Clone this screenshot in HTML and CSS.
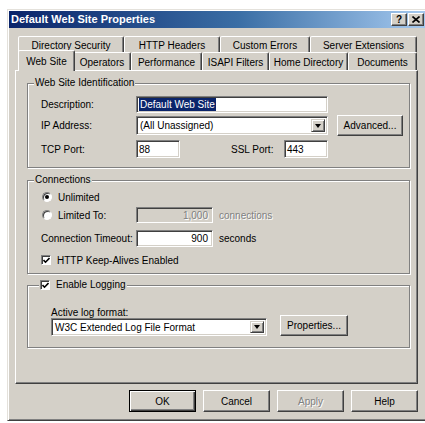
FILE: index.html
```html
<!DOCTYPE html>
<html>
<head>
<meta charset="utf-8">
<title>Default Web Site Properties</title>
<link rel="stylesheet" href="styles.css">
</head>
<body>
<div class="window">
  <div class="titlebar">
    <span class="title">Default Web Site Properties</span>
    <div class="tb-btns">
      <span class="tb-btn help">?</span>
      <span class="tb-btn close"><svg width="8" height="7" viewBox="0 0 8 7"><path d="M0.5 0.5 L7.5 6.5 M7.5 0.5 L0.5 6.5" stroke="#000" stroke-width="1.6" fill="none"/></svg></span>
    </div>
  </div>

  <div class="tabs">
    <div class="tabrow back">
      <div class="tab t1">Directory Security</div>
      <div class="tab t2">HTTP Headers</div>
      <div class="tab t3">Custom Errors</div>
      <div class="tab t4">Server Extensions</div>
    </div>
    <div class="tabrow front">
      <div class="tab sel f1">Web Site</div>
      <div class="tab f2">Operators</div>
      <div class="tab f3">Performance</div>
      <div class="tab f4">ISAPI Filters</div>
      <div class="tab f5">Home Directory</div>
      <div class="tab f6">Documents</div>
    </div>
  </div>

  <div class="panel">
    <div class="group g1">
      <div class="legend">Web Site Identification</div>
      <div class="row r-desc">
        <span class="label">Description:</span>
        <div class="field w-desc"><span class="hilite">Default Web Site</span></div>
      </div>
      <div class="row r-ip">
        <span class="label">IP Address:</span>
        <div class="combo w-ip"><span class="combo-text">(All Unassigned)</span><span class="dd"><i class="tri"></i></span></div>
        <div class="btn adv">Advanced...</div>
      </div>
      <div class="row r-port">
        <span class="label">TCP Port:</span>
        <div class="field w-port">88</div>
        <span class="label ssl">SSL Port:</span>
        <div class="field w-port">443</div>
      </div>
    </div>

    <div class="group g2">
      <div class="legend">Connections</div>
      <div class="row r-unl">
        <span class="radio on"></span><span class="opt">Unlimited</span>
      </div>
      <div class="row r-lim">
        <span class="optcell"><span class="radio"></span><span class="opt">Limited To:</span></span>
        <div class="field w-num disabled num">1,000</div>
        <span class="unit disabled-text">connections</span>
      </div>
      <div class="row r-to">
        <span class="label">Connection Timeout:</span>
        <div class="field w-num num">900</div>
        <span class="unit">seconds</span>
      </div>
      <div class="row r-keep">
        <span class="check on"><svg width="7" height="7" viewBox="0 0 7 7"><path d="M0.5 3 L2.5 5.2 L6.5 1" stroke="#000" stroke-width="1.6" fill="none"/></svg></span><span class="opt">HTTP Keep-Alives Enabled</span>
      </div>
    </div>

    <div class="group g3">
      <div class="legend check-legend">
        <span class="check on"><svg width="7" height="7" viewBox="0 0 7 7"><path d="M0.5 3 L2.5 5.2 L6.5 1" stroke="#000" stroke-width="1.6" fill="none"/></svg></span><span class="opt">Enable Logging</span>
      </div>
      <div class="row r-fmt-label">Active log format:</div>
      <div class="row r-fmt">
        <div class="combo w-fmt"><span class="combo-text">W3C Extended Log File Format</span><span class="dd"><i class="tri"></i></span></div>
        <div class="btn props">Properties...</div>
      </div>
    </div>
  </div>

  <div class="buttons">
    <div class="btn dlg default">OK</div>
    <div class="btn dlg">Cancel</div>
    <div class="btn dlg disabled-text">Apply</div>
    <div class="btn dlg">Help</div>
  </div>
</div>
</body>
</html>
```

FILE: styles.css
```css
* { box-sizing: border-box; }
html, body {
  margin: 0;
  padding: 0;
  width: 425px;
  height: 423px;
  background: #fff;
  overflow: hidden;
}
body {
  font-family: "Liberation Sans", Arial, sans-serif;
  font-size: 10px;
  color: #000;
}

.window {
  margin: 9px 0 0 7px;
  width: 421px;
  height: 412px;
  background: #d4d0c8;
  border: 1px solid;
  border-color: #e4e1db #404040 #404040 #e4e1db;
  box-shadow: inset 1px 1px #fff, inset -1px -1px #808080;
  padding: 1px;
}

/* title bar */
.titlebar {
  height: 17px;
  background: linear-gradient(to right, #0a246a, #3a6ea5 55%, #a6caf0);
  display: flex;
  align-items: center;
  justify-content: space-between;
  padding: 0 2px 0 2px;
}
.title {
  color: #fff;
  font-weight: bold;
  font-size: 11px;
  line-height: 13px;
}
.tb-btns { display: flex; gap: 1px; }
.tb-btn {
  width: 16px;
  height: 13px;
  background: #d4d0c8;
  border: 1px solid;
  border-color: #fff #404040 #404040 #fff;
  box-shadow: inset -1px -1px #808080;
  display: flex;
  align-items: center;
  justify-content: center;
  font-weight: bold;
  font-size: 10px;
  line-height: 10px;
}

/* tabs */
.tabs { margin: 8px 0 0 6px; width: 403px; }
.tabrow { display: flex; }
.tabrow.back { padding-left: 3px; height: 16px; }
.tabrow.front { padding-left: 5px; height: 18px; align-items: flex-end; }
.tab {
  height: 100%;
  border: 1px solid;
  border-bottom: none;
  border-color: #fff #404040 transparent #fff;
  box-shadow: inset -1px 0 #808080;
  border-radius: 2px 2px 0 0;
  display: flex;
  align-items: center;
  justify-content: center;
  white-space: nowrap;
  background: #d4d0c8;
  padding-top: 1px;
}
.t1 { width: 106px; }
.t2 { width: 96px; }
.t3 { width: 90px; }
.t4 { width: 107px; }
.f1 { width: 53px; }
.f2 { width: 58px; }
.f3 { width: 71px; }
.f4 { width: 67px; }
.f5 { width: 79px; }
.f6 { width: 69px; }
.tab.sel {
  width: 57px;
  height: 21px;
  margin: -2px -2px -1px -2px;
  position: relative;
  z-index: 1;
  padding-top: 0;
}

/* panel */
.panel {
  margin-left: 6px;
  width: 403px;
  height: 314px;
  border: 1px solid;
  border-color: #fff #404040 #404040 #fff;
  box-shadow: inset -1px -1px #808080;
  padding: 12px 7px 0 11px;
}

.group {
  border: 1px solid #808080;
  box-shadow: 1px 1px 0 #fff, inset 1px 1px 0 #fff;
  padding-left: 13px;
}
.g1 { height: 85px; }
.g2 { height: 94px; margin-top: 12px; }
.g3 { height: 63px; margin-top: 11px; padding-left: 23px; }

.legend {
  margin: -7px 0 0 -7px;
  padding: 0 1px;
  width: max-content;
  height: 12px;
  line-height: 12px;
  background: #d4d0c8;
}
.check-legend {
  margin-left: -12px;
  display: flex;
  align-items: center;
}

.row { display: flex; align-items: center; white-space: nowrap; }
.label { width: 95px; flex: none; }
.label.ssl { width: 53px; margin-left: 51px; }

.r-desc { height: 17px; margin-top: 7px; }
.r-ip { height: 21px; margin-top: 2px; }
.r-port { height: 18px; margin-top: 4px; }

.r-unl { height: 14px; margin-top: 4px; }
.r-lim { height: 16px; margin-top: 3px; }
.r-to { height: 17px; margin-top: 7px; }
.r-keep { height: 14px; margin-top: 6px; }

.r-fmt-label { height: 12px; margin-top: 15px; }
.r-fmt { height: 18px; align-items: flex-end; }

/* controls */
.field {
  height: 100%;
  background: #fff;
  border: 1px solid;
  border-color: #808080 #fff #fff #808080;
  box-shadow: inset 1px 1px #404040, inset -1px -1px #d4d0c8;
  padding: 0 2px;
  display: flex;
  align-items: center;
  overflow: hidden;
}
.field.num { justify-content: flex-end; padding-right: 4px; }
.field.disabled {
  background: #d4d0c8;
  color: #808080;
  text-shadow: 1px 1px #fff;
}
.w-desc { width: 192px; }
.w-port { width: 44px; }
.w-num { width: 77px; flex: none; }
.hilite { background: #0a246a; color: #fff; padding: 1px 1px; }

.combo {
  background: #fff;
  border: 1px solid;
  border-color: #808080 #fff #fff #808080;
  box-shadow: inset 1px 1px #404040, inset -1px -1px #d4d0c8;
  padding: 2px 2px 2px 3px;
  display: flex;
  align-items: center;
  flex: none;
}
.w-ip { width: 192px; height: 19px; }
.w-fmt { width: 216px; height: 18px; }
.combo-text { flex: 1; }
.dd {
  width: 14px;
  height: 100%;
  flex: none;
  background: #d4d0c8;
  border: 1px solid;
  border-color: #d4d0c8 #404040 #404040 #d4d0c8;
  box-shadow: inset 1px 1px #fff, inset -1px -1px #808080;
  display: flex;
  align-items: center;
  justify-content: center;
}
.tri {
  width: 0;
  height: 0;
  border-left: 3.5px solid transparent;
  border-right: 3.5px solid transparent;
  border-top: 4px solid #000;
}

.btn {
  background: #d4d0c8;
  border: 1px solid;
  border-color: #fff #404040 #404040 #fff;
  box-shadow: inset -1px -1px #808080;
  display: flex;
  align-items: center;
  justify-content: center;
  flex: none;
  white-space: nowrap;
}
.adv { width: 66px; height: 21px; margin-left: 9px; }
.props { width: 68px; height: 21px; margin-left: 13px; margin-top: -3px; }

.radio {
  width: 10px;
  height: 10px;
  border-radius: 50%;
  background: #fff;
  border: 1px solid;
  border-color: #808080 #fff #fff #808080;
  box-shadow: inset 1px 1px #404040;
  display: flex;
  align-items: center;
  justify-content: center;
  flex: none;
  margin-left: 1px;
}
.radio.on::after {
  content: "";
  width: 4px;
  height: 4px;
  border-radius: 50%;
  background: #000;
}
.opt { margin-left: 6px; }
.optcell { width: 95px; display: flex; align-items: center; flex: none; }

.check {
  width: 10px;
  height: 10px;
  background: #fff;
  border: 1px solid;
  border-color: #808080 #fff #fff #808080;
  box-shadow: inset 1px 1px #404040;
  display: flex;
  align-items: center;
  justify-content: center;
  flex: none;
}
.check-legend .opt { margin-left: 6px; }

.unit { margin-left: 6px; }
.disabled-text { color: #808080; text-shadow: 1px 1px #fff; }

/* bottom buttons */
.buttons {
  display: flex;
  gap: 7px;
  margin: 6px 0 0 120px;
}
.dlg { width: 67px; height: 22px; }
.dlg.default {
  border: 1px solid #000;
  box-shadow: inset 1px 1px #fff, inset -1px -1px #404040, inset -2px -2px #808080;
}
```
